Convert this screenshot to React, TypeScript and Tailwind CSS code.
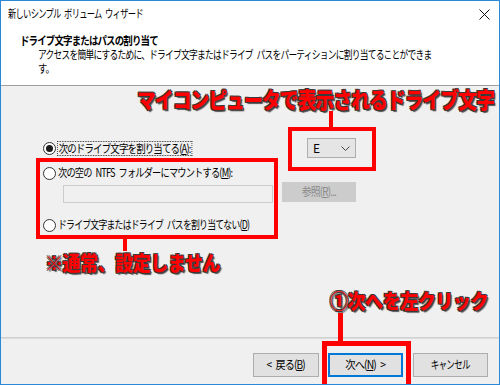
import React from "react";

const jp = "font-['Noto_Sans_CJK_JP','Noto_Sans',sans-serif]";
const redText =
  "absolute whitespace-nowrap origin-left font-['Noto_Sans_CJK_JP',sans-serif] font-black text-[#ff0000] [text-shadow:1px_1px_0_#3a3a3a,-1px_-1px_0_#3a3a3a,1px_-1px_0_#3a3a3a,-1px_1px_0_#3a3a3a,2px_2px_1px_#555]";

function Radio({ checked }: { checked?: boolean }) {
  return (
    <span className="w-[13px] h-[13px] rounded-full border border-[#333] bg-white flex items-center justify-center shrink-0">
      {checked && <span className="w-[7px] h-[7px] rounded-full bg-[#1a1a1a]" />}
    </span>
  );
}

export default function App() {
  return (
    <div className={`relative w-[500px] h-[385px] overflow-hidden bg-[#f0f0f0] border border-[#2b88d8] text-black ${jp}`}>
      <div className="flex flex-col h-full">
        {/* header */}
        <div className="bg-white h-[84px] flex flex-col">
          <div className="h-[26px] flex items-center justify-between pl-[7px] pr-[8px]">
            <span className="inline-block whitespace-nowrap origin-left scale-x-[0.72] text-[11.5px] tracking-[-1px]">新しいシンプル&ensp;ボリューム&ensp;ウィザード</span>
            <svg width="11" height="11" viewBox="0 0 11 11" className="mr-[1px]">
              <path d="M0.5 0.5 L10.5 10.5 M10.5 0.5 L0.5 10.5" stroke="#111" strokeWidth="1" />
            </svg>
          </div>
          <div className="pl-[19px] pt-[6px] text-[11.5px] leading-[14px] tracking-[-1px] flex flex-col items-start">
            <span className="inline-block whitespace-nowrap origin-left scale-x-[0.82] font-bold">ドライブ文字またはパスの割り当て</span>
            <span className="inline-block whitespace-nowrap origin-left scale-x-[0.76] ml-[18px]">アクセスを簡単にするために、ドライブ文字またはドライブ&ensp;パスをパーティションに割り当てることができま</span>
            <span className="inline-block whitespace-nowrap origin-left scale-x-[0.8] ml-[18px]">す。</span>
          </div>
        </div>
        <div className="h-px bg-[#a0a0a0]" />

        {/* body */}
        <div className="flex-1 pl-[42px] pt-[52px] text-[11.5px] tracking-[-1px]">
          <div className="flex items-center h-[20px]">
            <div className="w-[264px] flex items-center gap-[1px]">
              <Radio checked />
              <span className="inline-block whitespace-nowrap origin-left scale-x-[0.82] border border-dotted border-[#333] px-px leading-[13px]">次のドライブ文字を割り当てる(<u>A</u>):</span>
            </div>
            <div className="w-[49px] h-[20px] border border-[#adadad] bg-[#e5e5e5] flex items-center justify-between pl-[5px] pr-[5px]">
              <span className="text-[12px] tracking-normal">E</span>
              <svg width="9" height="5" viewBox="0 0 9 5">
                <path d="M0.5 0.5 L4.5 4.5 L8.5 0.5" stroke="#444" fill="none" />
              </svg>
            </div>
          </div>
          <div className="flex items-center h-[14px] mt-[8px] gap-[2px]">
            <Radio />
            <span className="inline-block whitespace-nowrap origin-left scale-x-[0.8]">次の空の&ensp;NTFS&ensp;フォルダーにマウントする(<u>M</u>):</span>
          </div>
          <div className="flex items-start mt-[2px] pl-[20px]">
            <div className="w-[210px] h-[18px] mt-[3px] border border-[#cccccc] bg-[#f0f0f0]" />
            <div className="ml-[9px] w-[74px] h-[20px] border border-[#cccccc] bg-[#cccccc] text-[#8a8a8a] flex items-center justify-center">
              <span className="inline-block whitespace-nowrap scale-x-[0.86]">参照(<u>R</u>)...</span>
            </div>
          </div>
          <div className="flex items-center h-[14px] mt-[15px] gap-[2px]">
            <Radio />
            <span className="inline-block whitespace-nowrap origin-left scale-x-[0.77]">ドライブ文字またはドライブ&ensp;パスを割り当てない(<u>D</u>)</span>
          </div>
        </div>

        {/* footer */}
        <div className="h-px bg-[#d0d0d0]" />
        <div className="h-px bg-[#dcdcdc]" />
        <div className="h-[45px] flex items-start pt-[14px] pl-[252px] text-[11.5px] tracking-[-1px]">
          <div className="w-[66px] h-[24px] border border-[#adadad] bg-[#e1e1e1] flex items-center justify-center">
            <span className="inline-block whitespace-nowrap scale-x-[0.88]">&lt;&ensp;戻る(<u>B</u>)</span>
          </div>
          <div className="ml-[9px] w-[75px] h-[24px] border-2 border-[#0078d7] bg-[#e1e1e1] flex items-center justify-center">
            <span className="inline-block whitespace-nowrap scale-x-[0.9]">次へ(<u>N</u>)&ensp;&gt;</span>
          </div>
          <div className="ml-[10px] w-[75px] h-[24px] border border-[#adadad] bg-[#e1e1e1] flex items-center justify-center">
            <span className="inline-block whitespace-nowrap scale-x-[0.74]">キャンセル</span>
          </div>
        </div>
      </div>

      {/* annotations */}
      <div className={`${redText} left-[136px] top-[83px] text-[22px] leading-[28px] tracking-[-1px] scale-x-[0.85]`}>
        マイコンピュータで表示されるドライブ文字
      </div>
      <div className="absolute left-[328px] top-[110px] w-[4px] h-[17px] bg-[#ff0000]" />
      <div className="absolute left-[287px] top-[126px] w-[88px] h-[44px] border-[4px] border-[#ff0000]" />

      <div className="absolute left-[35px] top-[157px] w-[242px] h-[81px] border-[4px] border-[#ff0000]" />
      <div className="absolute left-[122px] top-[238px] w-[4px] h-[12px] bg-[#ff0000]" />
      <div className={`${redText} left-[44px] top-[248px] text-[20px] leading-[28px] tracking-[-0.5px] scale-x-[0.9]`}>
        ※通常、設定しません
      </div>

      <div className={`${redText} left-[329px] top-[286px] text-[20px] leading-[28px] tracking-[-0.5px] scale-x-[0.9]`}>
        ①次へを左クリック
      </div>
      <div className="absolute left-[337px] top-[312px] w-[5px] h-[29px] bg-[#ff0000]" />
      <div className="absolute left-[321px] top-[340px] w-[89px] h-[50px] border-[5px] border-[#ff0000]" />
    </div>
  );
}
